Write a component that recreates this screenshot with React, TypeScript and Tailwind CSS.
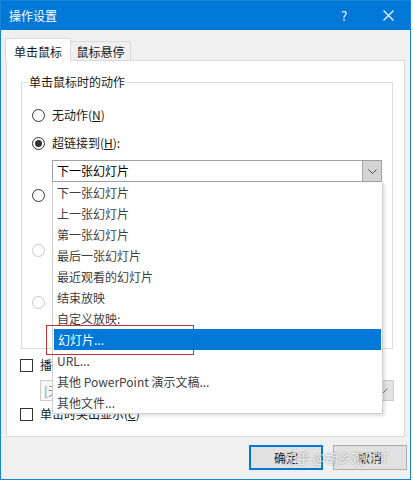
const listItems = [
  "下一张幻灯片",
  "上一张幻灯片",
  "第一张幻灯片",
  "最后一张幻灯片",
  "最近观看的幻灯片",
  "结束放映",
  "自定义放映:",
  "幻灯片...",
  "URL...",
  "其他 PowerPoint 演示文稿...",
  "其他文件...",
];

const selectedItem = "幻灯片...";

function Radio({ checked = false, disabled = false }: { checked?: boolean; disabled?: boolean }) {
  return (
    <span
      className={`flex h-[13px] w-[13px] shrink-0 items-center justify-center rounded-full border bg-white ${
        disabled ? "border-[#c8c8c8]" : "border-[#333333]"
      }`}
    >
      {checked && <span className="h-[7px] w-[7px] rounded-full bg-[#333333]" />}
    </span>
  );
}

function Checkbox() {
  return <span className="h-[13px] w-[13px] shrink-0 border border-[#333333] bg-white" />;
}

function Chevron({ color = "#444444" }: { color?: string }) {
  return (
    <svg width="9" height="5" viewBox="0 0 9 5" fill="none">
      <path d="M0.5 0.5 L4.5 4.5 L8.5 0.5" stroke={color} strokeWidth="1" />
    </svg>
  );
}

export default function App() {
  return (
    <div className="relative h-[481px] w-[414px] bg-white font-['Noto_Sans_CJK_SC',sans-serif] text-[12px] leading-[16px] text-[#1a1a1a]">
      <div className="flex h-[480px] w-[411px] flex-col border border-[#1883d7]">
        {/* title bar */}
        <div className="flex h-[29px] shrink-0 items-center bg-[#0078d7] text-white">
          <span className="pl-[8px]">操作设置</span>
          <span className="ml-auto flex w-[44px] items-center justify-center text-[13px]">?</span>
          <span className="flex w-[44px] items-center justify-center">
            <svg width="11" height="11" viewBox="0 0 11 11">
              <path d="M0.5 0.5 L10.5 10.5 M10.5 0.5 L0.5 10.5" stroke="white" strokeWidth="1.1" />
            </svg>
          </span>
        </div>

        <div className="flex flex-1 flex-col bg-[#f0f0f0] px-[5px] pt-[8px]">
          {/* tabs */}
          <div className="flex h-[22px] items-end">
            <div className="relative z-[1] -mb-px -ml-px h-[23px] w-[66px] border border-b-0 border-[#d9d9d9] bg-white pt-[5px] text-center">
              单击鼠标
            </div>
            <div className="h-[19px] w-[60px] border border-b-0 border-l-0 border-[#d9d9d9] bg-[#f0f0f0] pt-[2px] text-center">
              鼠标悬停
            </div>
          </div>

          {/* tab panel */}
          <div className="relative flex h-[377px] flex-col border border-[#d9d9d9] bg-white">
            <div className="relative ml-[14px] mt-[21px] h-[267px] w-[372px] border border-[#dcdcdc]">
              <span className="absolute -top-[9px] left-[6px] bg-white px-[1px]">单击鼠标时的动作</span>

              <div className="flex flex-col pl-[10px] pt-[22px]">
                <label className="flex h-[20px] items-center gap-[7px]">
                  <Radio />
                  <span>
                    无动作(<span className="underline">N</span>)
                  </span>
                </label>

                <label className="mt-[8px] flex h-[20px] items-center gap-[7px]">
                  <Radio checked />
                  <span>
                    超链接到(<span className="underline">H</span>):
                  </span>
                </label>

                {/* open combobox */}
                <div className="relative ml-[20px] mt-[7px] flex h-[22px] w-[330px] items-stretch border border-[#a0a0a0] bg-white">
                  <span className="flex flex-1 items-center pl-[4px] text-black">下一张幻灯片</span>
                  <span className="flex w-[19px] items-center justify-center border-l border-[#a8a8a8] bg-[#d4d4d4]">
                    <Chevron />
                  </span>

                  <ul className="absolute left-[-1px] top-[calc(100%+1px)] z-10 w-[331px] border border-t-0 border-[#cfcfcf] bg-white shadow-[2px_2px_3px_rgba(0,0,0,0.12)]">
                    {listItems.map((item) => (
                      <li
                        key={item}
                        className={`flex h-[21px] items-center pl-[4px] ${
                          item === selectedItem ? "mx-px bg-[#0078d7] pl-[3px] text-white" : "text-[#404040]"
                        }`}
                      >
                        {item}
                      </li>
                    ))}
                    <span className="pointer-events-none absolute left-[-7px] top-[143px] h-[30px] w-[148px] border border-[#c0303a]" />
                  </ul>
                </div>

                {/* remaining actions, covered by the open list */}
                <div className="mt-[3px] flex h-[20px] items-center">
                  <Radio />
                </div>
                <div className="ml-[20px] mt-[4px] h-[22px] w-[250px] border border-[#c8c8c8]" />

                <div className="mt-[9px] flex h-[20px] items-center">
                  <Radio disabled />
                </div>
                <div className="ml-[20px] mt-[4px] h-[22px] w-[330px] border border-[#d0d0d0] bg-[#f5f5f5]" />

                <div className="mt-[6px] flex h-[20px] items-center">
                  <Radio disabled />
                </div>
                <div className="ml-[20px] mt-[4px] h-[22px] w-[330px] border border-[#d0d0d0] bg-[#f5f5f5]" />
              </div>
            </div>

            <label className="ml-[13px] mt-[6px] flex h-[20px] items-center gap-[7px]">
              <Checkbox />
              <span>
                播放声音(<span className="underline">P</span>):
              </span>
            </label>

            <div className="ml-[33px] mt-[5px] flex h-[21px] w-[354px] items-stretch border border-[#cccccc] bg-[#f7f7f7] text-[#8a8a8a]">
              <span className="flex flex-1 items-center pl-[3px]">[无声音]</span>
              <span className="flex w-[20px] items-center justify-center border-l border-[#bdbdbd] bg-[#e3e3e3]">
                <Chevron color="#6d6d6d" />
              </span>
            </div>

            <label className="ml-[13px] mt-[3px] flex h-[20px] items-center gap-[7px]">
              <Checkbox />
              <span>
                单击时突出显示(<span className="underline">C</span>)
              </span>
            </label>
          </div>

          {/* dialog buttons */}
          <div className="-mr-[2px] mt-[8px] flex justify-end gap-[10px]">
            <button className="flex h-[25px] w-[74px] items-center justify-center border-2 border-[#0078d7] bg-[#e1e1e1]">
              确定
            </button>
            <button className="flex h-[25px] w-[74px] items-center justify-center border border-[#adadad] bg-[#e1e1e1]">
              取消
            </button>
          </div>
        </div>
      </div>

      <span className="pointer-events-none absolute left-[284px] top-[450px] text-[13px] text-white/80 [text-shadow:0_0_2px_rgba(0,0,0,0.45)]">
        知乎 @胡乡观PPT
      </span>
    </div>
  );
}
